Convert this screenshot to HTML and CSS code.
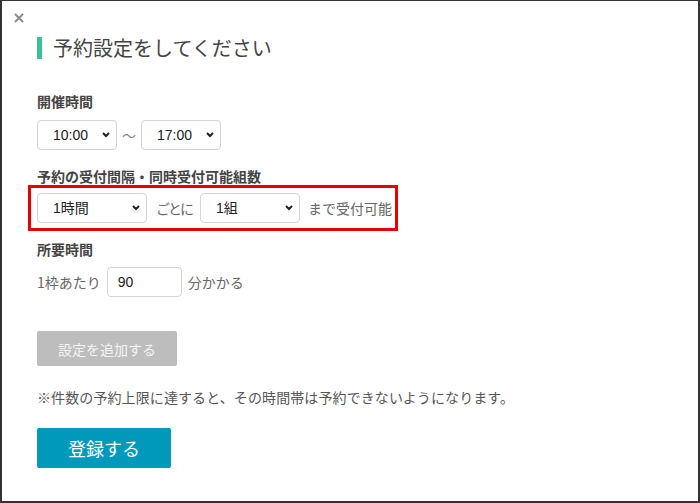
FILE: index.html
```html
<!DOCTYPE html>
<html lang="ja">
<head>
    <meta charset="UTF-8">
    <meta name="viewport" content="width=device-width, initial-scale=1.0">
    <title>予約設定</title>
    <link rel="stylesheet" href="styles.css">
</head>
<body>
    <div class="frame">
        <button class="close" aria-label="閉じる">
            <svg width="10" height="10" viewBox="0 0 10 10">
                <path d="M1 1 L9 9 M9 1 L1 9" stroke="#8c8c8c" stroke-width="2" fill="none"/>
            </svg>
        </button>
        <div class="content">
            <h1 class="title">予約設定をしてください</h1>

            <div class="label label-first">開催時間</div>
            <div class="row">
                <span class="select-wrap w-time">
                    <select><option>10:00</option></select>
                    <svg class="chevron" width="8" height="6" viewBox="0 0 8 6"><path d="M1 1 L4 4 L7 1" stroke="#222" stroke-width="2" fill="none"/></svg>
                </span>
                <span class="tilde">〜</span>
                <span class="select-wrap w-time">
                    <select><option>17:00</option></select>
                    <svg class="chevron" width="8" height="6" viewBox="0 0 8 6"><path d="M1 1 L4 4 L7 1" stroke="#222" stroke-width="2" fill="none"/></svg>
                </span>
            </div>

            <div class="label">予約の受付間隔・同時受付可能組数</div>
            <div class="row highlight">
                <span class="select-wrap w-interval">
                    <select><option>1時間</option></select>
                    <svg class="chevron" width="8" height="6" viewBox="0 0 8 6"><path d="M1 1 L4 4 L7 1" stroke="#222" stroke-width="2" fill="none"/></svg>
                </span>
                <span class="text text-between">ごとに</span>
                <span class="select-wrap w-group">
                    <select><option>1組</option></select>
                    <svg class="chevron" width="8" height="6" viewBox="0 0 8 6"><path d="M1 1 L4 4 L7 1" stroke="#222" stroke-width="2" fill="none"/></svg>
                </span>
                <span class="text text-after">まで受付可能</span>
            </div>

            <div class="label label-third">所要時間</div>
            <div class="row row-duration">
                <span class="text">1枠あたり</span>
                <input class="minutes" type="text" value="90">
                <span class="text">分かかる</span>
            </div>

            <button class="btn-add" disabled>設定を追加する</button>

            <p class="note">※件数の予約上限に達すると、その時間帯は予約できないようになります。</p>

            <button class="btn-submit">登録する</button>
        </div>
    </div>
</body>
</html>
```

FILE: styles.css
```css
* {
    box-sizing: border-box;
}
body {
    margin: 0;
    font-family: "Noto Sans CJK JP", "Noto Sans", sans-serif;
    color: #333333;
    background-color: #ffffff;
}
.frame {
    width: 700px;
    height: 503px;
    border: 2px solid #333333;
    border-top-width: 1px;
    overflow: hidden;
}
.close {
    display: block;
    width: 10px;
    height: 10px;
    margin: 12px 0 0 12px;
    padding: 0;
    border: none;
    background: none;
    cursor: pointer;
}
.close svg {
    display: block;
}
.content {
    padding-left: 35px;
}
.title {
    margin: 14px 0 0 0;
    padding-left: 11px;
    border-left: 5px solid #3dbf9c;
    font-size: 20px;
    font-weight: normal;
    line-height: 22px;
    color: #444444;
}
.label {
    margin-top: 17px;
    font-size: 14px;
    font-weight: bold;
    line-height: 18px;
    color: #444444;
}
.label-first {
    margin-top: 33px;
}
.label-third {
    margin-top: 9px;
}
.row {
    display: flex;
    align-items: center;
    margin-top: 10px;
    font-size: 14px;
}
.row-duration {
    margin-top: 9px;
}
.highlight {
    display: inline-flex;
    margin: 0 0 0 -9px;
    padding: 5px 3px 5px 6px;
    border: 3px solid #e60000;
}
.select-wrap {
    position: relative;
    display: inline-block;
    height: 30px;
}
.select-wrap select {
    -webkit-appearance: none;
    appearance: none;
    width: 100%;
    height: 30px;
    padding: 0 0 0 15px;
    border: 1px solid #d4d4d4;
    border-radius: 4px;
    background-color: #ffffff;
    font-family: "Liberation Sans", "Noto Sans CJK JP", sans-serif;
    font-size: 14px;
    color: #222222;
}
.chevron {
    position: absolute;
    top: 12px;
    right: 7px;
    pointer-events: none;
}
.w-time {
    width: 80px;
}
.w-interval {
    width: 110px;
}
.w-group {
    width: 100px;
}
.tilde {
    margin: 0 5px 0 5px;
    color: #888888;
    font-size: 14px;
}
.text {
    color: #666666;
    font-size: 14px;
}
.text-between {
    margin: 0 8px 0 9px;
    letter-spacing: -2px;
}
.text-after {
    margin-left: 8px;
}
.minutes {
    width: 75px;
    height: 30px;
    margin: 0 6px 0 6px;
    padding: 0 0 0 10px;
    border: 1px solid #d4d4d4;
    border-radius: 4px;
    font-family: "Liberation Sans", "Noto Sans CJK JP", sans-serif;
    font-size: 14px;
    color: #222222;
}
.btn-add {
    display: block;
    width: 140px;
    height: 35px;
    margin-top: 34px;
    border: none;
    border-radius: 2px;
    background-color: #bdbdbd;
    color: #f4f4f4;
    font-family: inherit;
    font-size: 14px;
}
.note {
    margin: 21px 0 0 0;
    font-size: 14px;
    line-height: 20px;
    letter-spacing: 0.1px;
    color: #555555;
}
.btn-submit {
    display: block;
    width: 134px;
    height: 40px;
    margin-top: 21px;
    border: none;
    border-radius: 2px;
    background-color: #0099bc;
    color: #ffffff;
    font-family: inherit;
    font-size: 18px;
    cursor: pointer;
}
.btn-submit:hover {
    background-color: #0088a8;
}
```
